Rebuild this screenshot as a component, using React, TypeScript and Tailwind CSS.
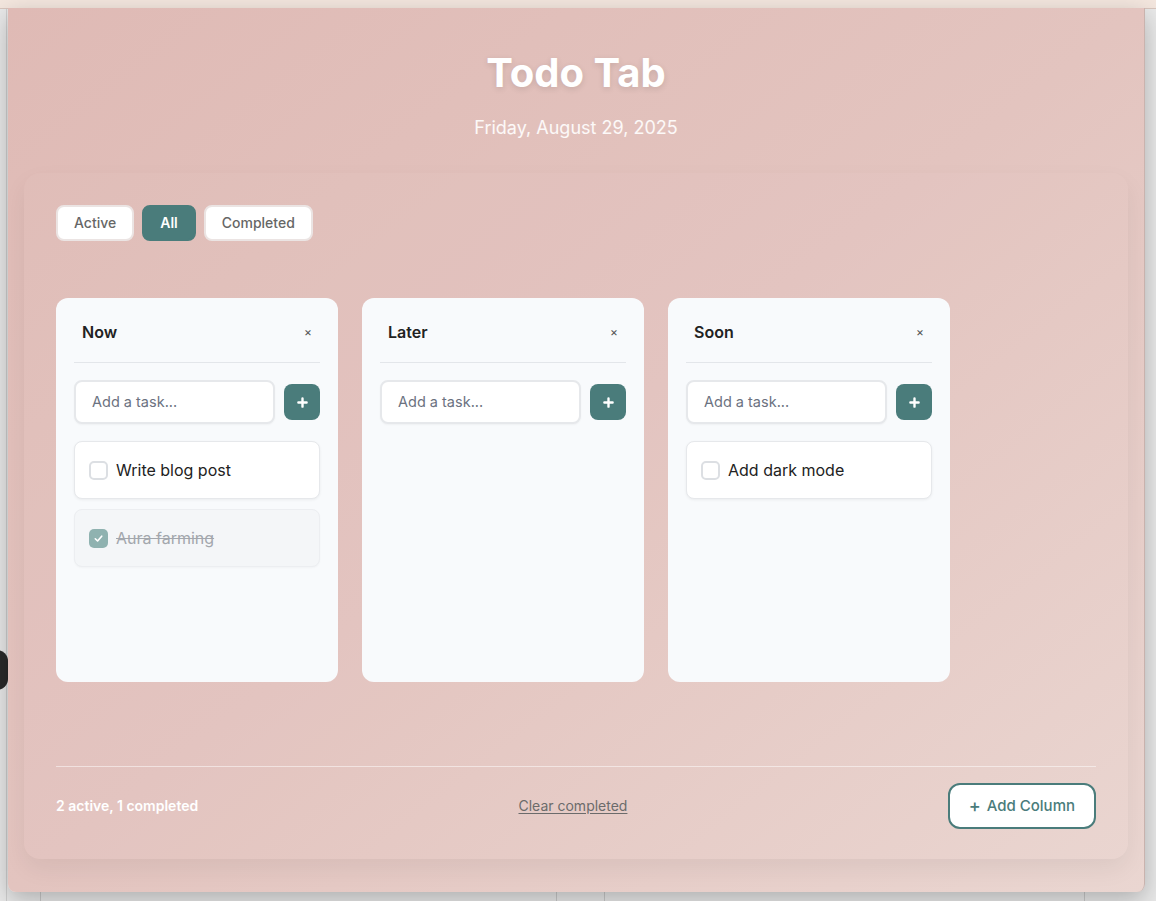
import React, { useState } from 'react';

type Task = { id: number; text: string; done: boolean };
type Column = { id: string; title: string; tasks: Task[] };

const initialColumns: Column[] = [
  {
    id: 'now',
    title: 'Now',
    tasks: [
      { id: 1, text: 'Write blog post', done: false },
      { id: 2, text: 'Aura farming', done: true },
    ],
  },
  { id: 'later', title: 'Later', tasks: [] },
  { id: 'soon', title: 'Soon', tasks: [{ id: 3, text: 'Add dark mode', done: false }] },
];

const TaskItem = ({ task }: { task: Task }) => {
  if (task.done) {
    return (
      <div className="flex items-center gap-2 h-[58px] px-[14px] rounded-lg bg-[#f4f6f8] border border-[#eceef1] shadow-[0_1px_2px_rgba(0,0,0,0.03)]">
        <div className="w-[19px] h-[19px] rounded-[5px] bg-[#8fb2b0] flex items-center justify-center">
          <svg width="11" height="11" viewBox="0 0 12 12" fill="none">
            <path d="M2.5 6.3 L5 8.7 L9.5 3.5" stroke="white" strokeWidth="1.8" strokeLinecap="round" strokeLinejoin="round" />
          </svg>
        </div>
        <span className="text-base text-[#a3a7ad] line-through">{task.text}</span>
      </div>
    );
  }
  return (
    <div className="flex items-center gap-2 h-[58px] px-[14px] rounded-lg bg-white border border-[#e6e8eb] shadow-[0_1px_3px_rgba(0,0,0,0.06)]">
      <div className="w-[19px] h-[19px] rounded-[5px] border-2 border-[#dcdfe3] bg-white" />
      <span className="text-base text-[#222]">{task.text}</span>
    </div>
  );
};

const ColumnCard = ({ column }: { column: Column }) => (
  <div className="w-[282px] h-[384px] rounded-xl bg-[#f8fafc] p-[18px] flex flex-col">
    <div className="flex items-center justify-between px-2 pt-1 pb-[18px] border-b border-[#e3e6ea]">
      <span className="text-base font-semibold text-[#222] leading-6">{column.title}</span>
      <span className="text-xs text-[#555]">×</span>
    </div>
    <div className="flex items-center gap-[9px] mt-[17px]">
      <div className="w-[201px] h-[44px] rounded-lg border-2 border-[#e6e8eb] bg-white flex items-center px-4 shadow-[0_1px_2px_rgba(0,0,0,0.04)]">
        <span className="text-[14.5px] text-[#6b7280]">Add a task...</span>
      </div>
      <button className="w-9 h-9 rounded-lg bg-[#4a7c7b] flex items-center justify-center">
        <svg width="11" height="11" viewBox="0 0 12 12">
          <path d="M6 1.5 V10.5 M1.5 6 H10.5" stroke="white" strokeWidth="2.6" strokeLinecap="round" />
        </svg>
      </button>
    </div>
    <div className="flex flex-col gap-[10px] mt-[17px]">
      {column.tasks.map(t => (
        <TaskItem key={t.id} task={t} />
      ))}
    </div>
  </div>
);

export default function App() {
  const [filter, setFilter] = useState('All');
  const filters = ['Active', 'All', 'Completed'];

  return (
    <div className="relative w-[1156px] h-[901px] overflow-hidden bg-[#e9e9e9] font-['Inter',sans-serif]">
      {/* page behind the popup */}
      <div className="absolute top-0 left-0 right-0 h-[9px] bg-[#f3e6de] border-b border-[#d8c5bd]" />
      <div className="absolute left-[6px] top-[9px] bottom-0 w-px bg-[#cfcfcf]" />
      <div className="absolute left-[-14px] top-[650px] w-[22px] h-[40px] rounded-full bg-[#2a2a2a]" />
      <div className="absolute left-[40px] bottom-0 h-[12px] w-px bg-[#c9c9c9]" />
      <div className="absolute left-[556px] bottom-0 h-[12px] w-px bg-[#c9c9c9]" />
      <div className="absolute left-[604px] bottom-0 h-[12px] w-px bg-[#c9c9c9]" />
      <div className="absolute left-[1084px] bottom-0 h-[12px] w-px bg-[#c9c9c9]" />

      {/* popup window */}
      <div className="absolute left-[8px] top-[8px] w-[1137px] h-[884px] rounded-b-lg bg-gradient-to-br from-[#dfbab5] via-[#e3c4bf] to-[#ead6d1] shadow-[0_8px_24px_rgba(0,0,0,0.25)] border-r border-[#c9b3ae] flex flex-col items-center pt-[41px] px-4">
        <h1 className="text-[40px] leading-[48px] font-bold text-white [text-shadow:0_2px_6px_rgba(0,0,0,0.12)]">Todo Tab</h1>
        <p className="mt-[17px] text-lg leading-7 text-white/90">Friday, August 29, 2025</p>

        <div className="mt-[31px] w-full rounded-2xl bg-white/[0.015] shadow-[0_10px_24px_rgba(0,0,0,0.06)] px-8 pt-8 pb-[30px]">
          <div className="flex gap-2">
            {filters.map(f => (
              <button
                key={f}
                onClick={() => setFilter(f)}
                className={
                  f === filter
                    ? 'h-9 px-4 rounded-lg border-2 border-[#4a7c7b] bg-[#4a7c7b] text-white text-sm font-semibold'
                    : 'h-9 px-4 rounded-lg border-2 border-[#ebe4e3] bg-white text-[#666] text-sm font-medium'
                }
              >
                {f}
              </button>
            ))}
          </div>

          <div className="flex gap-6 mt-[57px] mb-[84px]">
            {initialColumns.map(c => (
              <ColumnCard key={c.id} column={c} />
            ))}
          </div>

          <div className="border-t border-white/50 pt-4 flex items-center justify-between">
            <span className="text-sm font-semibold text-white">2 active, 1 completed</span>
            <button className="text-sm text-[#6b6b6b] underline underline-offset-2">Clear completed</button>
            <button className="h-[46px] px-[19px] rounded-xl border-2 border-[#4a7c7b] bg-white flex items-center gap-[6px] text-[#4a7c7b] text-[15px] font-medium">
              <span className="text-lg leading-none">+</span>
              Add Column
            </button>
          </div>
        </div>
      </div>
    </div>
  );
}
